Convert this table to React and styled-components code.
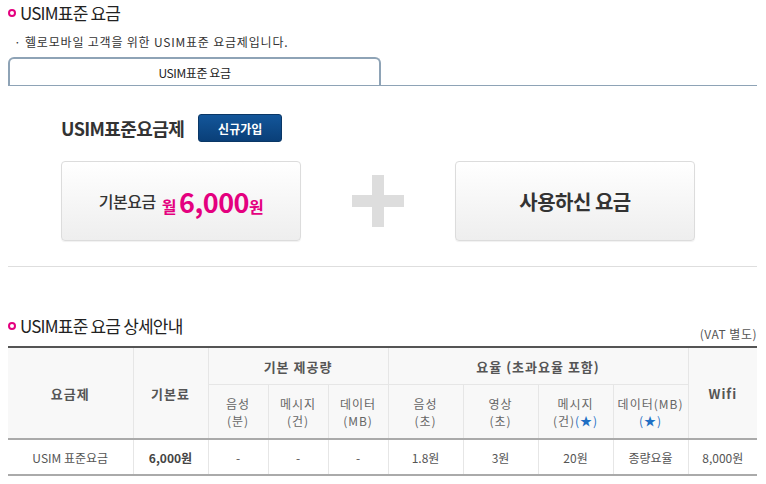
import styled, { createGlobalStyle } from "styled-components";

const GlobalStyle = createGlobalStyle`
  html, body { margin: 0; padding: 0; background: #fff; }
  body {
    font-family: "Noto Sans CJK KR", "Noto Sans", "Liberation Sans", sans-serif;
    color: #333;
  }
`;

const Page = styled.div`
  width: 749px;
  padding: 0 0 0 8px;
`;

const Title = styled.h2`
  display: flex;
  align-items: center;
  gap: 4px;
  margin: 0 0 ${(p) => p.$mb || 0}px;
  height: ${(p) => p.$h || 24}px;
  font-size: 17px;
  font-weight: 400;
  color: #222;
  letter-spacing: -0.8px;
  &::before {
    content: "";
    width: 4px;
    height: 4px;
    border: 2px solid #e4007f;
    border-radius: 50%;
    margin-top: 1px;
  }
`;

const Desc = styled.p`
  margin: 8px 0 0 6px;
  font-size: 12px;
  line-height: 20px;
  color: #333;
  letter-spacing: 0.8px;
`;

const TabBar = styled.div`
  display: flex;
  margin-top: 5px;
  border-bottom: 1px solid #8ea3b6;
`;

const Tab = styled.div`
  width: 369px;
  height: 26px;
  border: 2px solid #8ea3b6;
  border-bottom: none;
  border-radius: 6px 6px 0 0;
  display: flex;
  align-items: center;
  justify-content: center;
  font-size: 12px;
  color: #222;
  letter-spacing: -0.4px;
`;

const PlanHead = styled.div`
  display: flex;
  align-items: center;
  gap: 14px;
  margin: 28px 0 0 53px;
`;

const PlanName = styled.h3`
  margin: 0;
  font-size: 18px;
  font-weight: 700;
  color: #333;
  letter-spacing: -0.6px;
`;

const JoinButton = styled.button`
  width: 84px;
  height: 28px;
  border: 1px solid #0a3766;
  border-radius: 3px;
  background: linear-gradient(#13569a, #0a3f78);
  color: #fff;
  font-family: inherit;
  font-size: 12px;
  font-weight: 700;
  padding: 0;
`;

const FeeRow = styled.div`
  display: flex;
  align-items: center;
  margin: 19px 0 0 53px;
`;

const FeeBox = styled.div`
  width: 238px;
  height: 78px;
  border: 1px solid #dcdcdc;
  border-radius: 4px;
  background: linear-gradient(#ffffff, #eeeeee);
  box-shadow: 0 1px 1px rgba(0, 0, 0, 0.06);
  display: flex;
  align-items: center;
  justify-content: center;
  gap: 6px;
  color: #333;
`;

const Label = styled.span`
  font-size: ${(p) => p.$size || 16}px;
  font-weight: ${(p) => (p.$bold ? 700 : 500)};
  letter-spacing: -0.5px;
`;

const Pink = styled.span`
  color: #e4007f;
  font-weight: 700;
  font-size: ${(p) => p.$size || 16}px;
  letter-spacing: -0.5px;
`;

const Amount = styled.span`
  display: flex;
  align-items: baseline;
`;

const PlusWrap = styled.div`
  width: 154px;
  display: flex;
  justify-content: center;
`;

const Divider = styled.hr`
  border: none;
  border-top: 1px solid #dedede;
  margin: 25px 0 0;
`;

const DetailHead = styled.div`
  display: flex;
  justify-content: space-between;
  align-items: flex-end;
  margin-top: 47px;
`;

const Vat = styled.span`
  font-size: 12px;
  line-height: 17px;
  color: #555;
  letter-spacing: 0.5px;
`;

const Table = styled.table`
  width: 749px;
  margin-top: 4px;
  border-collapse: collapse;
  table-layout: fixed;
  border-top: 2px solid #555;
  border-bottom: 2px solid #aaa;
  font-size: 12px;
  color: #555;
  text-align: center;
`;

const Th = styled.th`
  background: #f8f8f8;
  border: 1px solid #e6e6e6;
  border-top: none;
  font-size: ${(p) => (p.$sub ? 12 : 13)}px;
  font-weight: ${(p) => (p.$sub ? 400 : 700)};
  color: ${(p) => (p.$sub ? "#666" : "#555")};
  line-height: 17px;
  height: ${(p) => p.$h}px;
  padding: 0;
  vertical-align: middle;
  letter-spacing: 1px;
  &:first-child { border-left: none; }
  &:last-child { border-right: none; }
`;

const HeadRow = styled.tr`
  border-bottom: 2px solid #aaa;
`;

const Td = styled.td`
  border-left: 1px solid #e6e6e6;
  height: 34px;
  padding: 0;
  font-weight: ${(p) => (p.$bold ? 700 : 400)};
  color: ${(p) => (p.$bold ? "#444" : "#555")};
  &:first-child { border-left: none; }
`;

const Star = styled.span`
  color: #1f6fc4;
`;

function Plus() {
  return (
    <svg width="52" height="52" viewBox="0 0 52 52">
      <rect x="20" y="0" width="12" height="52" fill="#dddddd" />
      <rect x="0" y="20" width="52" height="12" fill="#dddddd" />
    </svg>
  );
}

const widths = [125, 75, 60, 60, 60, 75, 75, 75, 75, 69];

export default function App() {
  return (
    <Page>
      <GlobalStyle />
      <Title>USIM표준 요금</Title>
      <Desc>· 헬로모바일 고객을 위한 USIM표준 요금제입니다.</Desc>
      <TabBar>
        <Tab>USIM표준 요금</Tab>
      </TabBar>

      <PlanHead>
        <PlanName>USIM표준요금제</PlanName>
        <JoinButton>신규가입</JoinButton>
      </PlanHead>

      <FeeRow>
        <FeeBox>
          <Label>기본요금</Label>
          <Amount>
            <Pink $size={16}>월&nbsp;</Pink>
            <Pink $size={27}>6,000</Pink>
            <Pink $size={16}>원</Pink>
          </Amount>
        </FeeBox>
        <PlusWrap>
          <Plus />
        </PlusWrap>
        <FeeBox>
          <Label $size={20} $bold>사용하신 요금</Label>
        </FeeBox>
      </FeeRow>

      <Divider />

      <DetailHead>
        <Title $h={22} $mb={6}>USIM표준 요금 상세안내</Title>
        <Vat>(VAT 별도)</Vat>
      </DetailHead>

      <Table>
        <colgroup>
          {widths.map((w, i) => (
            <col key={i} style={{ width: w }} />
          ))}
        </colgroup>
        <thead>
          <tr>
            <Th rowSpan={2}>요금제</Th>
            <Th rowSpan={2}>기본료</Th>
            <Th colSpan={3} $h={36}>기본 제공량</Th>
            <Th colSpan={4} $h={36}>요율 (초과요율 포함)</Th>
            <Th rowSpan={2}>Wifi</Th>
          </tr>
          <HeadRow>
            <Th $sub $h={53}>음성<br />(분)</Th>
            <Th $sub>메시지<br />(건)</Th>
            <Th $sub>데이터<br />(MB)</Th>
            <Th $sub>음성<br />(초)</Th>
            <Th $sub>영상<br />(초)</Th>
            <Th $sub>메시지<br />(건)<Star>(★)</Star></Th>
            <Th $sub>데이터(MB)<br /><Star>(★)</Star></Th>
          </HeadRow>
        </thead>
        <tbody>
          <tr>
            <Td>USIM 표준요금</Td>
            <Td $bold>6,000원</Td>
            <Td>-</Td>
            <Td>-</Td>
            <Td>-</Td>
            <Td>1.8원</Td>
            <Td>3원</Td>
            <Td>20원</Td>
            <Td>종량요율</Td>
            <Td>8,000원</Td>
          </tr>
        </tbody>
      </Table>
    </Page>
  );
}
